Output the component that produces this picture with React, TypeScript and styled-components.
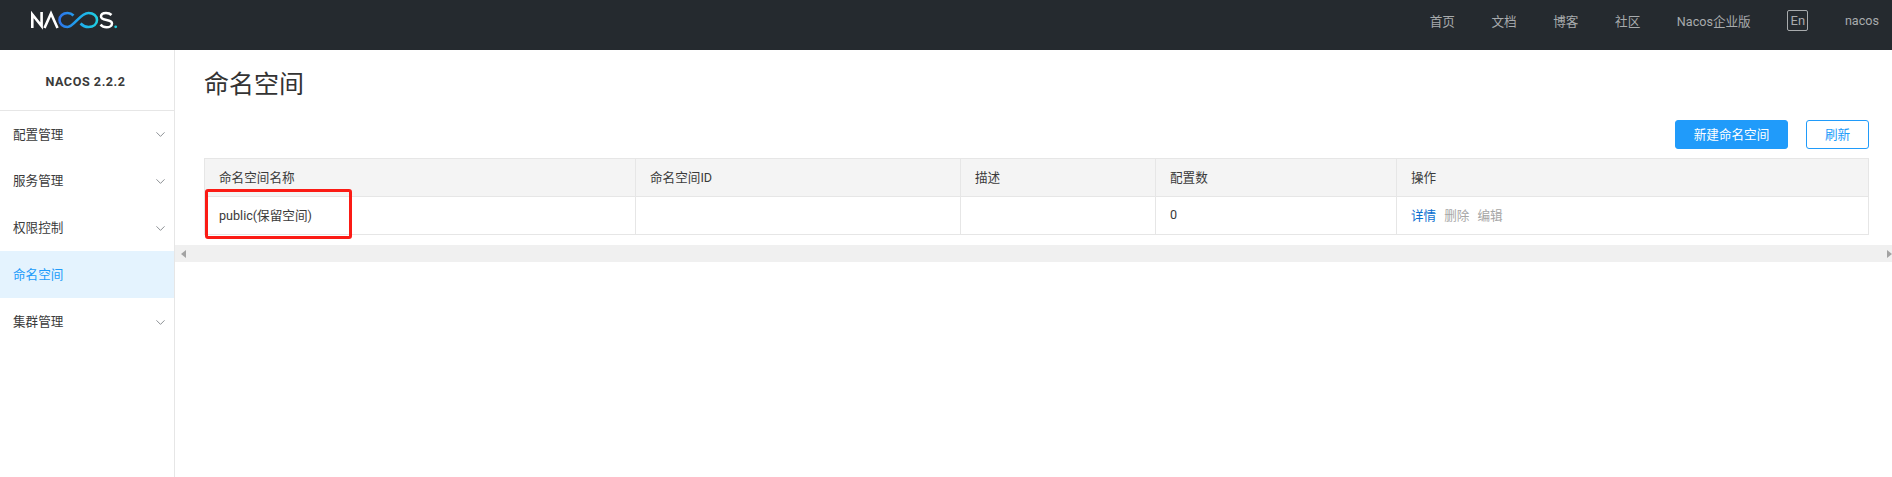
import styled, { createGlobalStyle } from 'styled-components';
import { ChevronDown } from 'lucide-react';

const GlobalStyle = createGlobalStyle`
    html, body {
        margin: 0;
        padding: 0;
        background: #fff;
        overflow: hidden;
    }
    * {
        box-sizing: border-box;
    }
    body {
        font-family: Roboto, "Noto Sans CJK SC", sans-serif;
        font-size: 12.6px;
        color: #3a3a3a;
    }
`

const Page = styled.div`
    width: 1892px;
    height: 477px;
    display: flex;
    flex-direction: column;
`

const Header = styled.header`
    height: 50px;
    flex: none;
    background: #252a2f;
    display: flex;
    align-items: center;
    justify-content: space-between;
    padding: 0 13px 0 30px;
`

const Logo = styled.svg`
    width: 90px;
    height: 20px;
    margin-top: -10px;
    display: block;
`

const TopNav = styled.nav`
    display: flex;
    align-items: center;
    gap: 36.6px;
    color: #a8abad;
    margin-top: -10px;
`

const LangBox = styled.span`
    width: 21px;
    height: 21px;
    border: 1px solid #a8abad;
    border-radius: 2px;
    display: flex;
    align-items: center;
    justify-content: center;
    font-size: 13px;
`

const Body = styled.div`
    flex: 1;
    display: flex;
    min-height: 0;
`

const Sidebar = styled.aside`
    width: 175px;
    flex: none;
    border-right: 1px solid #e6e6e6;
`

const SideTitle = styled.div`
    height: 60px;
    padding: 3px 3px 0 0;
    display: flex;
    align-items: center;
    justify-content: center;
    font-weight: 700;
    font-size: 12.6px;
    letter-spacing: 0.55px;
`

const SideItem = styled.div<{ $active?: boolean }>`
    height: 47px;
    padding: 0 6px 2px 13px;
    display: flex;
    align-items: center;
    justify-content: space-between;
    color: ${(p) => (p.$active ? '#209bfa' : '#3a3a3a')};
    background: ${(p) => (p.$active ? '#e4f3fe' : 'transparent')};

    &:first-child {
        border-top: 1px solid #e6e6e6;
    }

    svg {
        color: #666b70;
        margin-top: 3px;
    }
`

const Main = styled.main`
    flex: 1;
    min-width: 0;
    display: flex;
    flex-direction: column;
    position: relative;
`

const Title = styled.h1`
    margin: 0;
    padding: 15px 0 0 29px;
    height: 70px;
    font-size: 25px;
    line-height: 40px;
    font-weight: 400;
    color: #333;
`

const Toolbar = styled.div`
    display: flex;
    justify-content: flex-end;
    gap: 18px;
    padding-right: 23px;
    height: 38px;
`

const Button = styled.button<{ $primary?: boolean }>`
    height: 29px;
    padding: 0 0 2px;
    width: ${(p) => (p.$primary ? '113px' : '63px')};
    border-radius: 3px;
    border: 1px solid #209bfa;
    background: ${(p) => (p.$primary ? '#209bfa' : '#fff')};
    color: ${(p) => (p.$primary ? '#fff' : '#209bfa')};
    font: inherit;
`

const Table = styled.div`
    margin: 0 23px 0 29px;
    display: grid;
    grid-template-columns: 431px 325px 195px 241px 1fr;
    border-top: 1px solid #e6e6e6;
    border-left: 1px solid #e6e6e6;
`

const Cell = styled.div<{ $head?: boolean }>`
    height: 38px;
    padding: 0 14px 2px;
    display: flex;
    align-items: center;
    gap: 8px;
    background: ${(p) => (p.$head ? '#f4f4f4' : '#fff')};
    border-right: 1px solid #e6e6e6;
    border-bottom: 1px solid #e6e6e6;
`

const ActionLink = styled.span<{ $disabled?: boolean }>`
    color: ${(p) => (p.$disabled ? '#a6a6a6' : '#0b6fd0')};
`

const Highlight = styled.div`
    position: absolute;
    left: 30px;
    top: 139px;
    width: 147px;
    height: 50px;
    border: 3px solid #fb1b15;
    border-radius: 3px;
`

const ScrollTrack = styled.div`
    margin-top: 10px;
    height: 17px;
    background: #f0f0f0;
    display: flex;
    align-items: center;
    justify-content: space-between;
    padding: 0 0 0 6px;
`

const Arrow = styled.span<{ $right?: boolean }>`
    width: 0;
    height: 0;
    border-top: 4px solid transparent;
    border-bottom: 4px solid transparent;
    ${(p) => (p.$right ? 'border-left: 5px solid #a3a3a3;' : 'border-right: 5px solid #a3a3a3;')}
`

const menu = [
    { label: '配置管理', expandable: true },
    { label: '服务管理', expandable: true },
    { label: '权限控制', expandable: true },
    { label: '命名空间', active: true },
    { label: '集群管理', expandable: true },
]

const NacosLogo = () => (
    <Logo viewBox="0 0 90 20" fill="none">
        <defs>
            <linearGradient id="infinity" x1="28" x2="68" y1="0" y2="0" gradientUnits="userSpaceOnUse">
                <stop offset="0" stopColor="#2f6fe8" />
                <stop offset="0.5" stopColor="#1fa6ee" />
                <stop offset="1" stopColor="#1fd0e0" />
            </linearGradient>
        </defs>
        <path d="M2.3 18V4.5L11.6 16V2" stroke="#fff" strokeWidth="2.6" />
        <path d="M14.5 18L21 3.5L27.5 18" stroke="#fff" strokeWidth="2.6" />
        <path
            d="M43.5 5.5C41.5 3.5 39.5 3 37.5 3C33 3 29.5 6 29.5 10C29.5 14.2 33 17 37.5 17C44 17 50 3 58.5 3C63.5 3 67 6 67 10C67 14.2 63.5 17 58.5 17C55 17 52.5 15.5 50.5 13.5"
            stroke="url(#infinity)"
            strokeWidth="2.6"
        />
        <path
            d="M81.5 5C80 3.5 78 3 76 3C73 3 71 4.4 71 6.6C71 11.5 82 8.6 82 13.4C82 15.8 79.5 17.2 76.5 17.2C74 17.2 72 16.3 70.5 14.6"
            stroke="#fff"
            strokeWidth="2.5"
        />
        <circle cx="85.7" cy="16.8" r="1.4" fill="#1fd0e0" />
    </Logo>
)

const App = () => {
    return (
        <Page>
            <GlobalStyle />
            <Header>
                <NacosLogo />
                <TopNav>
                    <span>首页</span>
                    <span>文档</span>
                    <span>博客</span>
                    <span>社区</span>
                    <span>Nacos企业版</span>
                    <LangBox>En</LangBox>
                    <span>nacos</span>
                </TopNav>
            </Header>
            <Body>
                <Sidebar>
                    <SideTitle>NACOS 2.2.2</SideTitle>
                    <div>
                        {menu.map((item) => (
                            <SideItem key={item.label} $active={item.active}>
                                {item.label}
                                {item.expandable && <ChevronDown size={15} strokeWidth={1.2} />}
                            </SideItem>
                        ))}
                    </div>
                </Sidebar>
                <Main>
                    <Title>命名空间</Title>
                    <Toolbar>
                        <Button $primary>新建命名空间</Button>
                        <Button>刷新</Button>
                    </Toolbar>
                    <Table>
                        <Cell $head>命名空间名称</Cell>
                        <Cell $head>命名空间ID</Cell>
                        <Cell $head>描述</Cell>
                        <Cell $head>配置数</Cell>
                        <Cell $head>操作</Cell>
                        <Cell>public(保留空间)</Cell>
                        <Cell />
                        <Cell />
                        <Cell>0</Cell>
                        <Cell>
                            <ActionLink>详情</ActionLink>
                            <ActionLink $disabled>删除</ActionLink>
                            <ActionLink $disabled>编辑</ActionLink>
                        </Cell>
                    </Table>
                    <Highlight />
                    <ScrollTrack>
                        <Arrow />
                        <Arrow $right />
                    </ScrollTrack>
                </Main>
            </Body>
        </Page>
    )
}

export default App
